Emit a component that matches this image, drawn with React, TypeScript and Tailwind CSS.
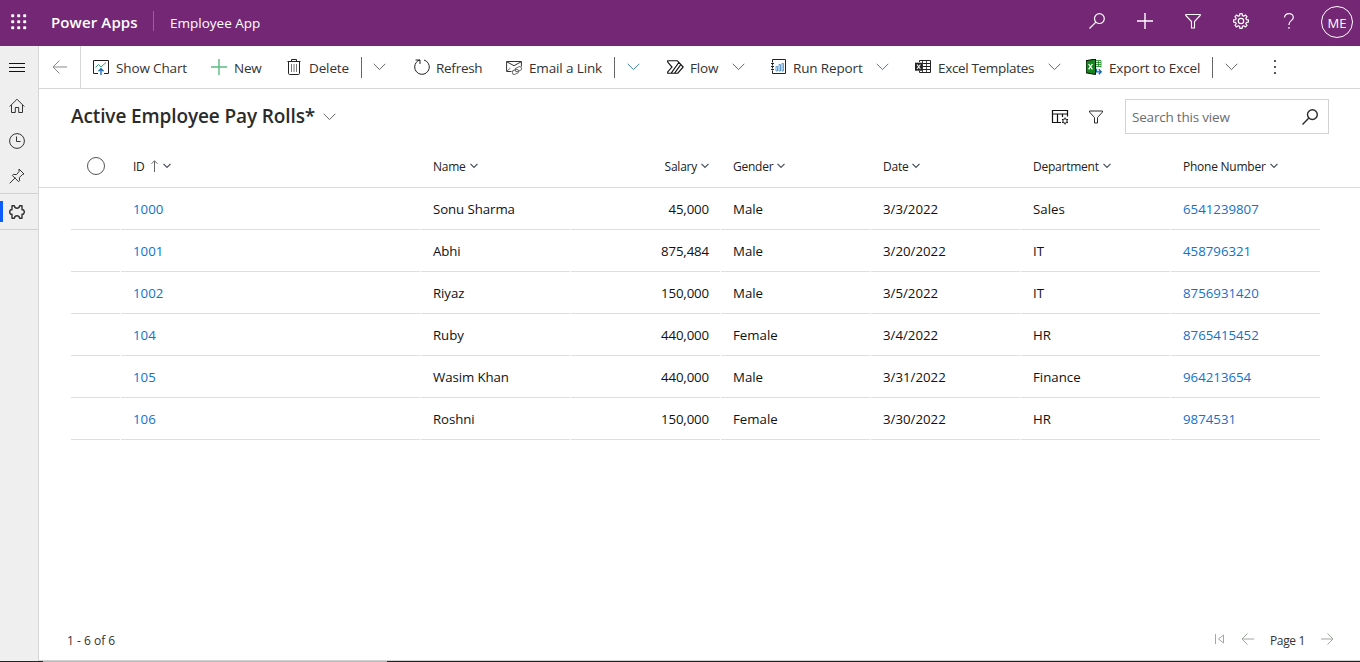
import React from "react";

type SvgProps = { className?: string; children?: React.ReactNode; size?: number; sw?: number };

function Svg({ className = "", children, size = 16, sw = 1 }: SvgProps) {
  return (
    <svg
      width={size}
      height={size}
      viewBox={`0 0 ${size} ${size}`}
      fill="none"
      stroke="currentColor"
      strokeWidth={sw}
      className={`block shrink-0 ${className}`}
    >
      {children}
    </svg>
  );
}

const GEAR =
  "M6.9.6h2.2l.3 2 1.3.6 1.7-1.2 1.6 1.6-1.2 1.7.6 1.3 2 .3v2.2l-2 .3-.6 1.3 1.2 1.7-1.6 1.6-1.7-1.2-1.3.6-.3 2H6.9l-.3-2-1.3-.6-1.7 1.2L2 12.4l1.2-1.7-.6-1.3-2-.3V6.9l2-.3.6-1.3L2 3.6 3.600 2l1.7 1.2 1.3-.6z";

const SearchIcon = ({ className = "", sw = 1.2 }: { className?: string; sw?: number }) => (
  <Svg className={className} sw={sw}>
    <circle cx="10.4" cy="5.6" r="4.9" />
    <path d="M6.900 9.100.5 15.500" />
  </Svg>
);

const FilterIcon = ({ className = "", sw = 1.1, d = "M.8 1.500h14.400v1L9.500 8.500v6.500h-3V8.500L.8 2.500z" }: { className?: string; sw?: number; d?: string }) => (
  <Svg className={className} sw={sw}>
    <path d={d} />
  </Svg>
);

function Chevron({ className = "" }: { className?: string }) {
  return (
    <svg width="13" height="8" viewBox="0 0 13 8" fill="none" stroke="currentColor" className={`block shrink-0 ${className}`}>
      <path d="M.7.8l5.800 5.800L12.300.8" />
    </svg>
  );
}

function SmallChevron() {
  return (
    <svg width="8" height="6" viewBox="0 0 8 6" fill="none" stroke="#4a5258" strokeWidth="1.3" className="-mt-0.5 block shrink-0">
      <path d="M.5.9L4 4.400 7.500.9" />
    </svg>
  );
}

const ChartIcon = () => (
  <Svg>
    <path d="M5 14.500H.5v-13h15v13H11" stroke="#222" />
    <path d="M2.500 8.500l3-3 2.500 2.500L13 3.500" stroke="#30a46c" />
    <path d="M8 16V10M5.500 12.200L8 9.700l2.500 2.500" stroke="#1466b8" strokeWidth="1.3" />
  </Svg>
);

const PlusIcon = ({ className = "" }: { className?: string }) => (
  <Svg className={className}>
    <path d="M8 0v16M0 8h16" strokeWidth="1.4" />
  </Svg>
);

const TrashIcon = () => (
  <Svg className="text-[#222]">
    <path d="M1.500 2.500h13M5.500 2.500v-2h5v2M2.500 2.500v11.800q0 1.200 1.200 1.200h8.600q1.200 0 1.200-1.200V2.500" />
    <path d="M5.500 5v8M8 5v8M10.500 5v8" stroke="#555" strokeWidth=".8" />
  </Svg>
);

const RefreshIcon = () => (
  <Svg className="ml-px -mr-px text-[#222]">
    <path d="M1.500 1h4.500v4M6 1C2.800 1.700.7 4.600.7 8a7.300 7.300 0 1 0 9.300-7" />
  </Svg>
);

const MailLinkIcon = () => (
  <Svg className="text-[#333]">
    <path d="M5.500 12.500H.6v-10h14.800v5M.8 2.800L8 6.700l7.200-3.900" />
    <path d="M1 12l3.500-3" strokeWidth=".7" />
    <g stroke="#666" strokeWidth=".9">
      <rect x="9" y="8.200" width="6.500" height="4" rx="2" transform="rotate(-25 12.200 10)" />
      <rect x="6.200" y="10.800" width="6.500" height="4" rx="2" transform="rotate(-25 9.500 12.700)" />
    </g>
  </Svg>
);

const FlowIcon = () => (
  <svg width="17" height="14" viewBox="0 0 17 14" fill="none" stroke="#111" strokeWidth="1.15" className="ml-px -mr-px block shrink-0">
    <path d="M10.200.7H.7v1.400L5 7 .7 12v1.200h3.500L11.800 2.500M10.200.7L16.200 7l-5.400 6.200H7.600l6-8.300M4.200 13.200h3.400" />
  </svg>
);

const ReportIcon = () => (
  <Svg className="ml-px -mr-px text-[#222]">
    <path d="M1.500 3.500v-3h13v14h-13v-3M1.500 5v1.500M1.500 8v1.500M0 4.500h3M0 7.500h3M0 10.500h3" />
    <path d="M5 7.500h1.500v4.500H5zM8 5.500h1.500v6.500H8zM11 4.500h1.500v7.500H11z" stroke="#3a86c8" strokeWidth=".8" />
  </Svg>
);

const ExcelTemplateIcon = () => (
  <Svg className="text-[#222]">
    <path d="M4.500 3V1.500h11v12h-11V12M8 4.500h7.500M8 7.500h7.500M8 10.500h7.500" />
    <path d="M11.500 1.500v12M7.500 1v13" strokeWidth=".8" />
    <path d="M0 3.700h7.500v8H0z" fill="#222" stroke="none" />
    <path d="M2 5.500l3.400 4.500M5.400 5.500l-3.400 4.500" stroke="#fff" strokeWidth="1.1" />
  </Svg>
);

const ExcelExportIcon = () => (
  <Svg>
    <path d="M9 1.500h6v7M9 3.500h6M9 5.500h6M9 7.500h6M12.500 2v6" stroke="#15881d" strokeWidth=".8" />
    <path d="M0 1.700L9.500 0v15.500L0 13.800z" fill="#15881d" />
    <path d="M2.600 5l3.800 5.400M6.400 5l-3.800 5.400" stroke="#fff" strokeWidth="1.3" />
    <path d="M10.500 9.800v3h4.500M12.800 10.300l2.400 2.500-2.400 2.500" stroke="#1466b8" strokeWidth="1.3" />
  </Svg>
);

function Label({ w, t, children }: { w: string; t: string; children: string }) {
  return <span className={`ml-[7px] block shrink-0 whitespace-nowrap pt-[3px] text-[13.5px] text-[#333] ${w} ${t}`}>{children}</span>;
}

function Divider() {
  return <span className="block h-[21px] w-px shrink-0 bg-[#666]" />;
}

function Header() {
  return (
    <header className="flex h-[46px] shrink-0 items-center bg-[#742774] text-white">
      <svg width="16" height="16" viewBox="0 0 16 16" fill="white" className="ml-[11px] -mt-[3px] block shrink-0">
        {[0, 6, 12].map((y) => [0, 6, 12].map((x) => <rect key={`${x}-${y}`} x={x + 0.2} y={y + 0.2} width="3" height="3" rx=".8" />))}
      </svg>
      <span className="-mt-0.5 ml-6 w-[87px] shrink-0 whitespace-nowrap text-[15px] font-semibold tracking-[0.008em]">Power Apps</span>
      <span className="-mt-1 ml-[15px] h-5 w-px shrink-0 bg-[#9a609a]" />
      <span className="ml-4 shrink-0 whitespace-nowrap text-[13.5px]">Employee App</span>
      <div className="ml-auto -mt-1 flex items-center gap-8">
        <SearchIcon />
        <PlusIcon />
        <FilterIcon />
        <Svg sw={1.2}>
          <path d={GEAR} strokeLinejoin="round" />
          <circle cx="8" cy="8" r="2.7" />
        </Svg>
        <Svg sw={1.2}>
          <path d="M3.500 4.500C3.500 2 5.400.7 8 .7s4.300 1.500 4.300 3.800C12.300 7.500 8 7.800 8 11.200v.8M8 14v1.800" />
        </Svg>
      </div>
      <div className="ml-6 mr-[7px] -mt-0.5 flex size-8 shrink-0 items-center justify-center rounded-full border border-white pt-[3px] text-[13px]">
        ME
      </div>
    </header>
  );
}

function Sidebar() {
  return (
    <nav className="flex w-[39px] shrink-0 flex-col border-r border-[#d6d6d6] bg-[#efefef] text-[#333]">
      <svg width="17" height="11" viewBox="0 0 17 11" stroke="#111" className="ml-[9px] mt-4 block">
        <path d="M0 1.500h16M0 5.500h16M0 9.500h16" />
      </svg>
      <Svg className="ml-[9px] mt-[25px]">
        <path d="M.7 8.500L8 1.200l7.300 7.300M2.500 7v7.500h3.800V9.500h3.400v5h3.800V7" />
      </Svg>
      <Svg className="ml-[9px] mt-[19px]">
        <circle cx="8" cy="8" r="7.4" />
        <path d="M7.500 3.500v5h4" />
      </Svg>
      <Svg className="ml-[9px] mt-[19px]">
        <path d="M10 1l5 5-1.600.5-3 3 .2 3.200-1 1L3.300 7.400l1-1 3.200.2 2.500-3zM6.300 9.700L.7 15.300" />
      </Svg>
      <div className="mt-[9px] flex h-[37px] items-center border-y border-[#d0d0d0]">
        <span className="h-[21px] w-[3px] bg-[#0a5cff]" />
        <Svg className="ml-1.5" sw={1.4}>
          <path
            d="M3 1.700h2.300c.3 1.600 1.100 2.600 2.700 2.600s2.400-1 2.700-2.600H13v4.100h1.300q2 2.200 0 4.400H13v4.100h-2.300c-.3-1.600-1.100-2.600-2.700-2.600s-2.400 1-2.700 2.600H3v-4.100H1.700q-2-2.200 0-4.400H3z"
            strokeLinejoin="round"
          />
        </Svg>
      </div>
    </nav>
  );
}

function CommandBar() {
  return (
    <div className="flex h-[43px] shrink-0 items-center border-b border-[#d6d6d6]">
      <div className="flex h-full w-[42px] shrink-0 items-center border-r border-[#d6d6d6] pl-[13px]">
        <Svg className="text-[#8a8a8a]">
          <path d="M15 8H1M7.500 1.500L1 8l6.500 6.500" />
        </Svg>
      </div>
      <span className="w-3" />
      <ChartIcon />
      <Label w="w-[95px]" t="tracking-[-0.01em]">Show Chart</Label>
      <PlusIcon className="text-[#58bd83]" />
      <Label w="w-[52px]" t="tracking-[-0.02em]">New</Label>
      <TrashIcon />
      <Label w="w-[52px]" t="tracking-[-0.01em]">Delete</Label>
      <Divider />
      <Chevron className="ml-[11px] mr-[27px] text-[#666]" />
      <RefreshIcon />
      <Label w="w-[70px]" t="tracking-[-0.02em]">Refresh</Label>
      <MailLinkIcon />
      <Label w="w-[85px]" t="tracking-[-0.01em]">Email a Link</Label>
      <Divider />
      <Chevron className="ml-3 mr-[26px] text-[#4080b0]" />
      <FlowIcon />
      <Label w="w-[42px]" t="tracking-[-0.01em]">Flow</Label>
      <Chevron className="mr-[25px] text-[#666]" />
      <ReportIcon />
      <Label w="w-[83px]" t="tracking-[-0.01em]">Run Report</Label>
      <Chevron className="mr-[26px] text-[#4080b0]" />
      <ExcelTemplateIcon />
      <Label w="w-[110px]" t="tracking-[-0.025em]">Excel Templates</Label>
      <Chevron className="mr-[25px] text-[#666]" />
      <ExcelExportIcon />
      <Label w="w-[103px]" t="tracking-[-0.01em]">Export to Excel</Label>
      <Divider />
      <Chevron className="ml-3 text-[#666]" />
      <svg width="3" height="15" viewBox="0 0 3 15" fill="#555" className="ml-9 block shrink-0">
        <rect width="2" height="2" y="0" />
        <rect width="2" height="2" y="6" />
        <rect width="2" height="2" y="12" />
      </svg>
    </div>
  );
}

function ViewBar() {
  return (
    <div className="flex h-[57px] shrink-0 items-center pb-0.5 pl-8 pr-[31px] text-[#2b2b2b]">
      <h1 className="w-[252px] whitespace-nowrap text-[19px] font-semibold tracking-[-0.006em]">Active Employee Pay Rolls*</h1>
      <Chevron className="text-[#666]" />
      <svg width="18" height="16" viewBox="0 0 18 16" fill="none" stroke="#111" className="ml-auto mr-px block shrink-0">
        <path d="M10 13.500H1.500v-12h15v6M1.500 5h15M6.500 5v8.500M11.500 5v3" strokeWidth="1.2" />
        <circle cx="14" cy="12" r="2.200" />
        <path d="M14 8.500v1.300M14 14.200v1.300M11 10.200l1.100.7M15.900 13.100l1.100.7M11 13.800l1.100-.7M15.900 10.900l1.100-.7" />
      </svg>
      <FilterIcon className="ml-[18px] mt-px" d="M1.500 2h13v1L9.500 8.500V14h-3V8.500L1.500 3z" sw={1} />
      <div className="ml-[21px] flex h-[35px] w-[204px] shrink-0 items-center justify-between border border-[#d2d2d2] pl-1.5 pr-2.5">
        <span className="pt-px text-[13.5px] tracking-[-0.015em] text-[#6c6c6c]">Search this view</span>
        <SearchIcon sw={1.4} />
      </div>
    </div>
  );
}

const GRID = "grid grid-cols-[50px_300px_150px_150px_150px_150px_150px_150px]";

const ROWS = [
  ["1000", "Sonu Sharma", "45,000", "Male", "3/3/2022", "Sales", "6541239807"],
  ["1001", "Abhi", "875,484", "Male", "3/20/2022", "IT", "458796321"],
  ["1002", "Riyaz", "150,000", "Male", "3/5/2022", "IT", "8756931420"],
  ["104", "Ruby", "440,000", "Female", "3/4/2022", "HR", "8765415452"],
  ["105", "Wasim Khan", "440,000", "Male", "3/31/2022", "Finance", "964213654"],
  ["106", "Roshni", "150,000", "Female", "3/30/2022", "HR", "9874531"],
];

const HEADS = ["ID", "Name", "Salary", "Gender", "Date", "Department", "Phone Number"];

function Table() {
  return (
    <div className="min-h-0 flex-1">
      <div className={`${GRID} h-[42px] items-center border-b border-[#dcdcdc] pl-8 text-[12px] font-medium tracking-[-0.02em] text-[#222]`}>
        <span className="-mt-0.5 ml-4 size-[18px] rounded-full border border-[#555]" />
        {HEADS.map((h, i) => (
          <div
            key={h}
            className={`flex items-center gap-1 whitespace-nowrap ${i === 2 ? "justify-end pr-3" : "pl-3"}`}
          >
            <span>{h}</span>
            {i === 0 && (
              <svg width="9" height="12" viewBox="0 0 9 12" fill="none" stroke="#666" className="-mt-px ml-px block">
                <path d="M4.500 12V.8M1.500 3.800l3-3 3 3" />
              </svg>
            )}
            <SmallChevron />
          </div>
        ))}
      </div>
      {ROWS.map((r) => (
        <div key={r[0]} className={`${GRID} h-[42px] pl-8 text-[13.25px] text-[#111]`}>
          <span className="mr-px border-b border-[#dedede]" />
          {r.map((c, i) => (
            <span
              key={i}
              className={`mr-px flex items-center whitespace-nowrap border-b border-[#dedede] pt-[3px] ${
                i === 2 ? "justify-end pr-[11px] tracking-[-0.01em]" : "pl-3"
              } ${i === 0 || i === 6 ? "text-[#1272c8]" : ""} ${i === 1 ? "tracking-[-0.006em]" : ""}`}
            >
              {c}
            </span>
          ))}
        </div>
      ))}
    </div>
  );
}

function Footer() {
  return (
    <footer className="flex h-[41px] shrink-0 items-center pl-7 pr-[26px] text-[12px] text-[#333]">
      <span className="pt-0.5">1 - 6 of 6</span>
      <div className="ml-auto flex items-center text-[#a0a8a0]">
        <svg width="11" height="10" viewBox="0 0 11 10" fill="none" stroke="currentColor" className="-mt-0.5 mr-4 block">
          <path d="M1.500 0v10M9.500 1v8L4.500 5z" />
        </svg>
        <svg width="13" height="12" viewBox="0 0 13 12" fill="none" stroke="currentColor" className="-mt-0.5 mr-4 block">
          <path d="M13 6H1M6.500.5L1 6l5.500 5.500" />
        </svg>
        <span className="w-[51px] whitespace-nowrap pt-0.5 tracking-[-0.03em] text-[#333]">Page 1</span>
        <svg width="13" height="12" viewBox="0 0 13 12" fill="none" stroke="currentColor" className="-mt-0.5 block">
          <path d="M0 6h12M6.500.5L12 6l-5.500 5.500" />
        </svg>
      </div>
    </footer>
  );
}

export default function App() {
  return (
    <div className="flex h-[662px] w-[1360px] flex-col overflow-hidden bg-white font-['Segoe_UI','Open_Sans','Noto_Sans',sans-serif]">
      <Header />
      <div className="flex min-h-0 flex-1">
        <Sidebar />
        <main className="flex min-w-0 flex-1 flex-col border-b border-[#d0d0d0]">
          <CommandBar />
          <ViewBar />
          <Table />
          <Footer />
        </main>
      </div>
      <div className="flex h-px shrink-0 bg-[#222]">
        <span className="ml-[43px] w-[344px] bg-[#bbb]" />
      </div>
    </div>
  );
}
